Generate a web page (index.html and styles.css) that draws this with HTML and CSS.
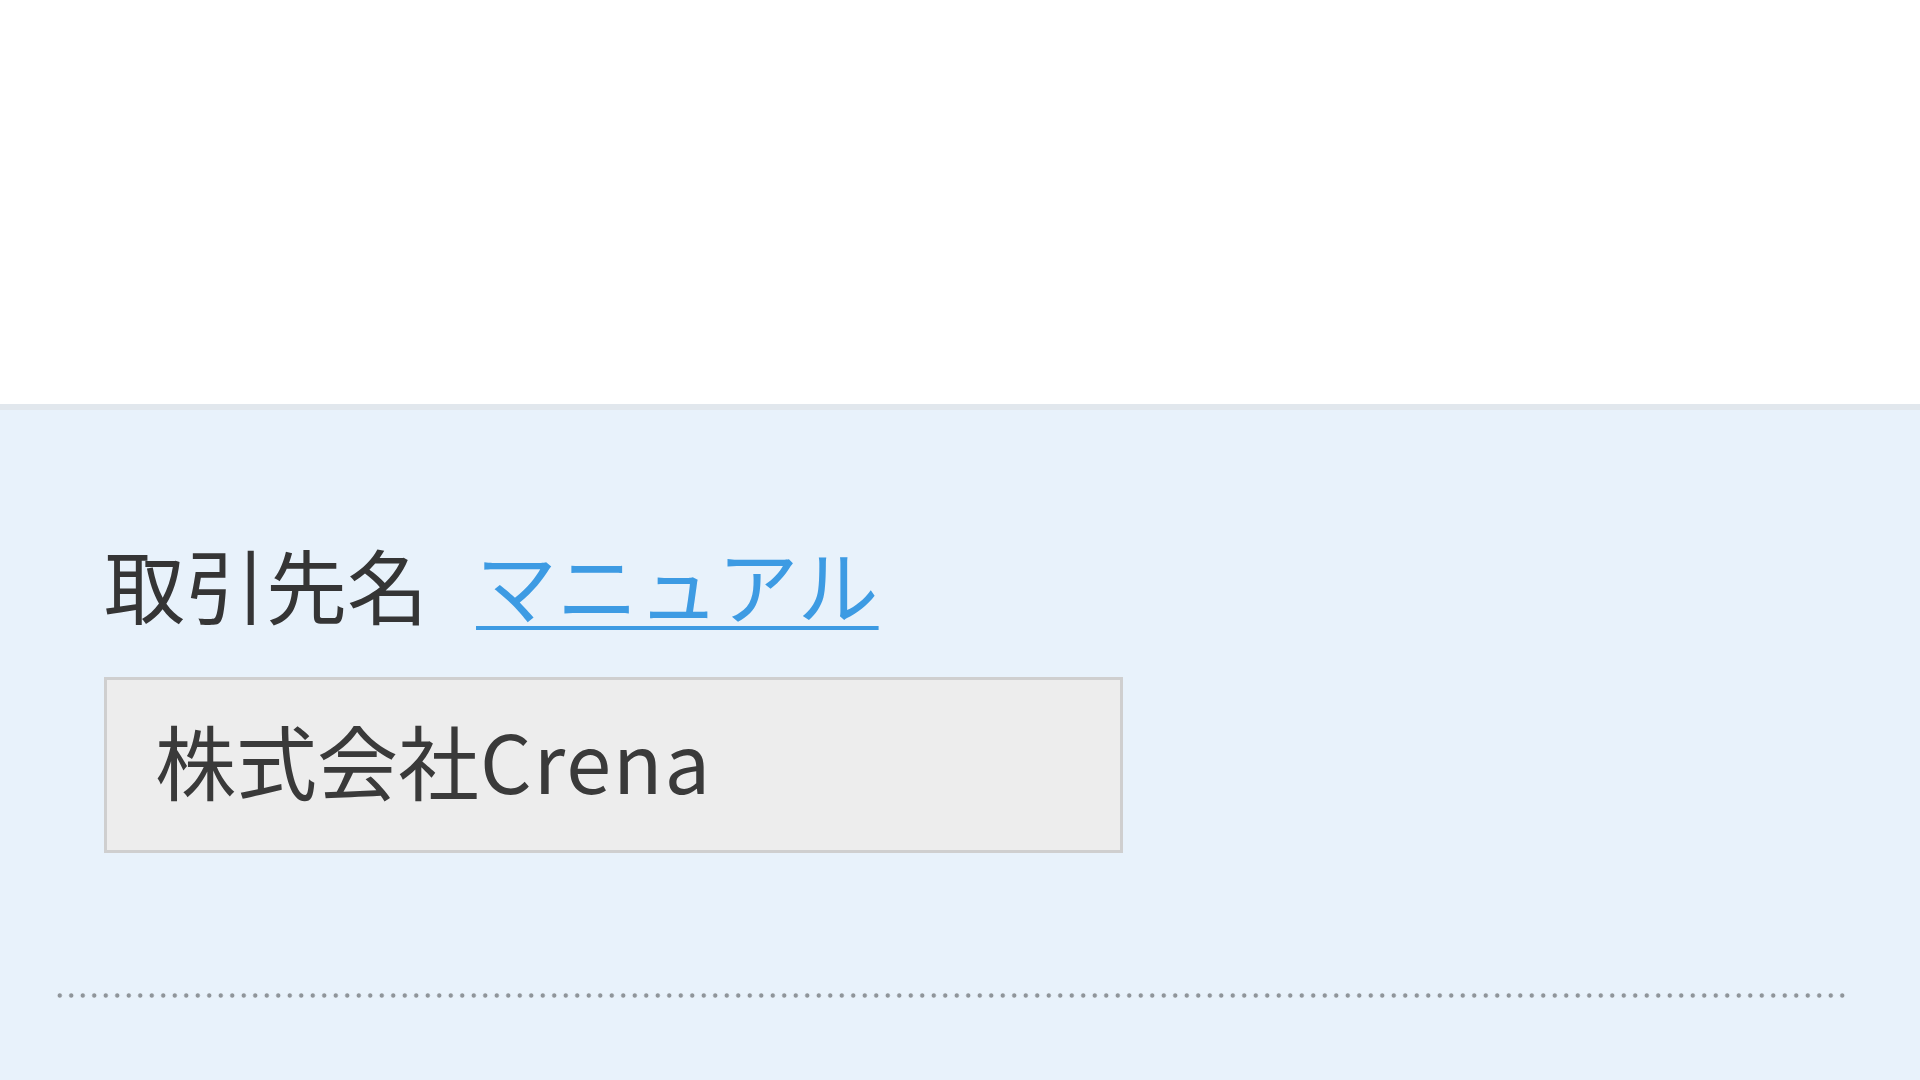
FILE: index.html
```html
<!DOCTYPE html>
<html lang="ja">
<head>
<meta charset="utf-8">
<title>取引先名</title>
<link rel="stylesheet" href="styles.css">
</head>
<body>
<div class="top"></div>
<section class="panel">
  <div class="field">
    <div class="label-row">
      <span class="label">取引先名</span>
      <a class="manual" href="#">マニュアル</a>
    </div>
    <div class="input">株式会社<span class="latin">Crena</span></div>
  </div>
  <div class="divider"></div>
</section>
</body>
</html>
```
FILE: styles.css
```css
html, body {
  margin: 0;
  padding: 0;
  height: 100%;
  overflow: hidden;
}
body {
  font-family: "Noto Sans CJK JP", "Noto Sans", sans-serif;
  background: #e8f2fb;
  color: #333;
}
.top {
  height: 404px;
  background: #fff;
  border-bottom: 6px solid #e1e7ed;
}
.panel {
  background: #e8f2fb;
  padding: 125px 73px 0 57px;
}
.field {
  padding-left: 47px;
}
.label-row {
  display: flex;
  align-items: baseline;
  gap: 48px;
  font-size: 81px;
  line-height: 96px;
}
.label {
  color: #353535;
}
.manual {
  color: #3d9be3;
  text-decoration: underline;
  text-decoration-thickness: 4px;
  text-underline-offset: 8px;
}
.input {
  margin-top: 46px;
  height: 158px;
  border: 3px solid #cfcfcf;
  background: #ededed;
  display: flex;
  align-items: center;
  padding: 0 0 12px 48px;
  box-sizing: content-box;
  width: 965px;
  font-size: 81px;
  line-height: 96px;
  color: #3a3a3a;
}
.latin {
  letter-spacing: 2px;
  margin-left: 1px;
}
.divider {
  margin-top: 140px;
  height: 5px;
  background-image: radial-gradient(circle, #8f959a 1.8px, transparent 2.6px);
  background-size: 11.5px 5px;
  background-position: -3px 0;
  background-repeat: repeat-x;
}
```
